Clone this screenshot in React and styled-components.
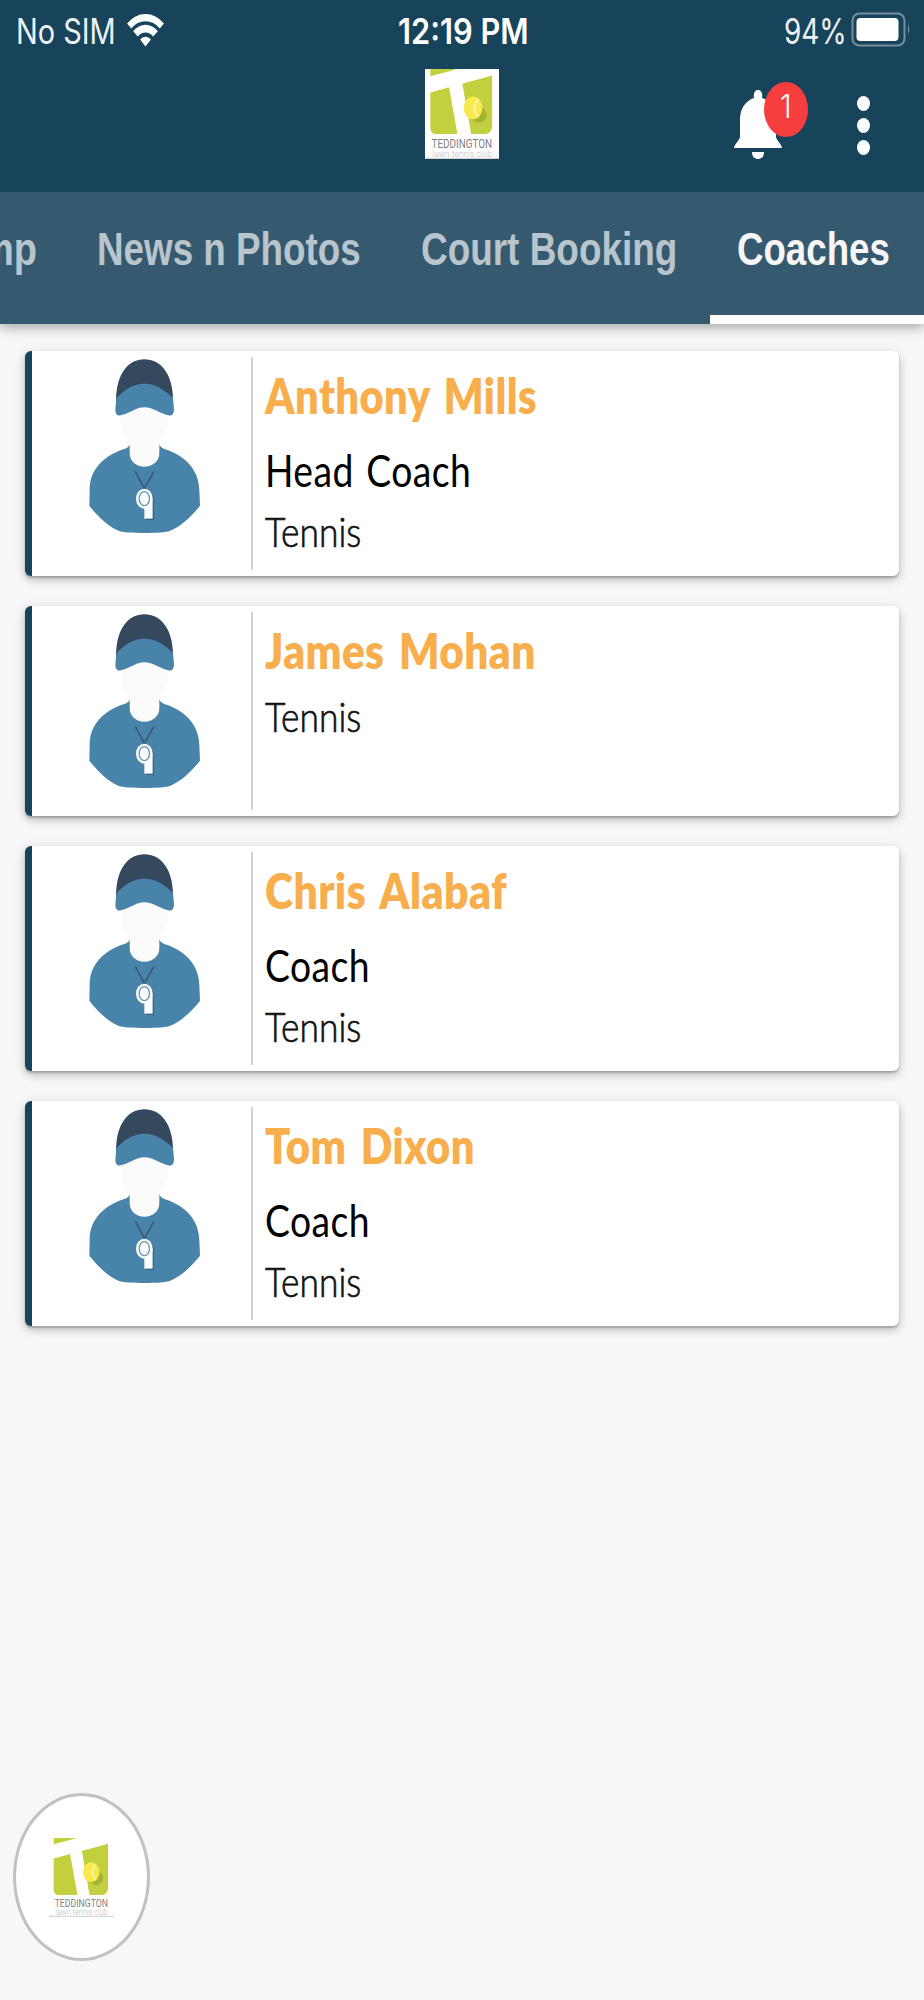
import { useLayoutEffect, useRef, useState } from "react";
import styled, { createGlobalStyle } from "styled-components";

const GlobalStyle = createGlobalStyle`
  * {
    box-sizing: border-box;
  }

  body {
    margin: 0;
    background-color: #f7f7f7;
  }
`;

const Page = styled.div`
  position: relative;
  width: 924px;
  height: 2000px;
  overflow: hidden;
  background-color: #f7f7f7;
  font-family: Lato, sans-serif;
`;

const FitBox = styled.span`
  display: block;
  flex: none;
  white-space: nowrap;
`;

const FitText = styled.span`
  display: inline-block;
  vertical-align: top;
  transform-origin: 0 0;
`;

const StatusBar = styled.div`
  display: grid;
  grid-template-columns: 1fr auto 1fr;
  height: 60px;
  padding: 13px 13px 0 16px;
  background-color: #18445b;
  color: #fff;
  font-family: Inter, sans-serif;
  font-size: 35px;
  line-height: 36px;
`;

const StatusGroup = styled.div`
  display: flex;
  justify-content: ${({ $end }) => ($end ? "flex-end" : "flex-start")};
  color: #eef2f4;
`;

const Time = styled.div`
  font-weight: 600;
`;

const WifiIcon = styled.svg`
  width: 37px;
  height: 33px;
  margin: 1px 0 0 11px;
`;

const BatteryIcon = styled.svg`
  width: 60px;
  height: 36px;
  margin: -2px 0 0 4px;
`;

const AppBar = styled.header`
  position: relative;
  z-index: 1;
  display: grid;
  grid-template-columns: 1fr auto 1fr;
  height: 132px;
  padding-top: 9px;
  background-color: #18445b;
`;

const LogoFrame = styled.div`
  grid-column: 2;
  width: 74px;
  height: 90px;
  background-color: #fff;
`;

const LogoSvg = styled.svg`
  display: block;
  width: 100%;
  height: 100%;
`;

const Actions = styled.div`
  display: flex;
  justify-content: flex-end;
  padding: 13px 54px 0 0;
`;

const BellButton = styled.div`
  position: relative;
  width: 74px;
  height: 78px;
`;

const BellIcon = styled.svg`
  display: block;
  width: 48px;
  height: 70px;
  margin-top: 8px;
`;

const Badge = styled.div`
  position: absolute;
  top: 0;
  left: 30px;
  display: flex;
  justify-content: center;
  width: 44px;
  height: 55px;
  padding-top: 9px;
  border-radius: 50%;
  background-color: #f73e3e;
  color: #fff;
  font-family: Inter, sans-serif;
  font-size: 32px;
  font-weight: 300;
  line-height: 32px;
`;

const MenuDots = styled.div`
  display: flex;
  flex-direction: column;
  gap: 7px;
  margin: 14px 0 0 49px;
`;

const Dot = styled.span`
  width: 13px;
  height: 15px;
  border-radius: 50%;
  background-color: #fff;
`;

const Tabs = styled.nav`
  position: relative;
  display: flex;
  justify-content: flex-end;
  gap: 60px;
  height: 132px;
  padding: 27px 34px 0 0;
  background-color: #355a6f;
  box-shadow: 0 3px 12px rgba(0, 0, 0, 0.35);
`;

const Tab = styled.div`
  position: relative;
  flex: none;
  color: ${({ $active }) => ($active ? "#f7f5f5" : "#b9c5cc")};
  font-family: "Liberation Sans", sans-serif;
  font-size: 46px;
  font-weight: 700;
  line-height: 60px;
`;

const TabLine = styled.span`
  position: absolute;
  right: -34px;
  bottom: 0;
  left: -27.5px;
  height: 9px;
  background-color: #fff;
`;

const CoachList = styled.main`
  display: flex;
  flex-direction: column;
  gap: 30px;
  padding: 27px 25px 0;
`;

const CoachCard = styled.article`
  display: flex;
  height: ${({ $short }) => ($short ? "209.5px" : "225px")};
  border-left: 7px solid #18445b;
  border-radius: 6px;
  background-color: #fff;
  box-shadow:
    0 2px 2px rgba(0, 0, 0, 0.2),
    0 4px 8px rgba(0, 0, 0, 0.2),
    0 2px 16px rgba(0, 0, 0, 0.06);
`;

const Portrait = styled.div`
  width: 221px;
  margin: 6px 0;
  padding: 1px 0 0 55px;
  border-right: 2px solid #d2d2d2;
`;

const PortraitSvg = styled.svg`
  display: block;
  width: 115px;
  height: 177px;
`;

const Details = styled.div`
  padding: 14px 0 0 12px;
`;

const Name = styled.div`
  color: #f8ae4c;
  font-size: 49px;
  font-weight: 800;
  letter-spacing: 0.5px;
  line-height: 60px;
  word-spacing: 5px;
`;

const Role = styled.div`
  margin: 15px 0 -5px;
  color: #000;
  font-size: 44px;
  font-weight: 400;
  letter-spacing: 0.5px;
  line-height: 60px;
  word-spacing: 3px;
`;

const Sport = styled.div`
  margin-top: 9px;
  color: #111;
  font-size: 42px;
  font-weight: 300;
  line-height: 54px;
  -webkit-text-stroke: 0.7px #111;
`;

const ClubButton = styled.div`
  position: absolute;
  top: 1793px;
  left: 13px;
  display: flex;
  justify-content: center;
  width: 137px;
  height: 168px;
  padding-top: 42px;
  border: 3px solid #c1c1c1;
  border-radius: 50%;
  background-color: #fff;
`;

const ClubLogo = styled.div`
  width: 65px;
  height: 79px;
`;

const coaches = [
  { name: "Anthony Mills", nameWidth: 272, role: "Head Coach", roleWidth: 206, sport: "Tennis" },
  { name: "James Mohan", nameWidth: 271, sport: "Tennis" },
  { name: "Chris Alabaf", nameWidth: 242, role: "Coach", roleWidth: 105, sport: "Tennis" },
  { name: "Tom Dixon", nameWidth: 210, role: "Coach", roleWidth: 105, sport: "Tennis" },
];

const tabs = [
  { label: "mp", width: 57 },
  { label: "News n Photos", width: 264 },
  { label: "Court Booking", width: 256 },
  { label: "Coaches", width: 153, active: true },
];

// Condenses a line of text horizontally until it fills the given width.
function Fit({ width, children }) {
  const ref = useRef(null);
  const [scale, setScale] = useState(1);

  useLayoutEffect(() => {
    setScale(width / ref.current.offsetWidth);
  }, [width, children]);

  return (
    <FitBox style={{ width }}>
      <FitText ref={ref} style={{ transform: `scaleX(${scale})` }}>{children}</FitText>
    </FitBox>
  );
}

function ClubArt() {
  return (
    <LogoSvg viewBox="148 172 194 238" preserveAspectRatio="none">
      <path fill="#c2d03f" d="M162 172H228L222 175L162 191Z" />
      <path fill="#c2d03f" d="M162 234L211 220L233 344H176Q162 342 162 328Z" />
      <path fill="#c2d03f" d="M246 211L324 189V325Q322 341 308 344H269Z" />
      <ellipse cx="290" cy="293" rx="20" ry="21" fill="#a3b332" />
      <ellipse cx="274" cy="275" rx="24.500" ry="30" fill="#fae94a" />
      <path fill="none" stroke="#fdf9c4" strokeWidth="4" d="M289 253C274 260 274 288 288 298" />
      <text x="165" y="381" textLength="159" lengthAdjust="spacingAndGlyphs" fill="#808080" fontFamily="Roboto, sans-serif" fontSize="33" fontWeight="400">TEDDINGTON</text>
      <text x="167" y="405" textLength="157" lengthAdjust="spacingAndGlyphs" fill="#bdbdbd" fontFamily="Roboto, sans-serif" fontSize="25" fontWeight="300">lawn tennis club</text>
      <path stroke="#b5b5b5" strokeWidth="2" d="M148 408H342" />
    </LogoSvg>
  );
}

function CoachArt() {
  return (
    <PortraitSvg viewBox="260 85 345 531" preserveAspectRatio="none">
      <path fill="#fbfbfb" d="M358 250C362 300 372 325 388 352V370C388 395 408 413 432 413C457 413 477 395 477 370V352C492 325 503 300 508 250L432 222Z" />
      <path fill="#34495e" d="M347 215C347 130 385 89 432 89C480 89 518 130 518 215Z" />
      <path fill="#4883aa" d="M348 205C375 178 400 162 432 162C465 162 493 180 518 205L521 238C521 254 514 260 503 257C475 250 460 233 432 233C405 233 392 250 362 257C351 259 345 252 345 240Z" />
      <path fill="#4883aa" d="M388 344C386 352 380 356 372 358C310 378 268 420 268 480L267 528C292 560 325 592 356 604C375 612 490 612 508 604C540 592 574 560 599 528L597 480C595 420 555 378 492 358C484 355 479 351 477 344V370C477 395 457 411 432 411C408 411 388 395 388 370Z" />
      <path fill="none" stroke="#3b5870" strokeWidth="5" d="M405 425L432 476L461 425" />
      <path fill="#35637f" d="M436 480C450 482 461 495 461 510V571H437L435 538Z" />
      <ellipse cx="432" cy="507" rx="25" ry="30" fill="#fbfbfb" />
      <path fill="#fbfbfb" d="M432 507H457V567H432Z" />
      <ellipse cx="432" cy="507" rx="15.500" ry="21" fill="#fbfbfb" stroke="#6699b9" strokeWidth="4" />
    </PortraitSvg>
  );
}

function App() {
  return (
    <>
      <GlobalStyle />
      <Page>
        <StatusBar>
          <StatusGroup>
            <Fit width={100}>No SIM</Fit>
            <WifiIcon viewBox="0 0 37 33" preserveAspectRatio="none">
              <path fill="#fff" d="M0.100 9.400A26 32 0 0 1 36.900 9.400L32.800 14.400A20.300 25 0 0 0 4.200 14.400Z" />
              <path fill="#fff" d="M6.200 17.200A17 21 0 0 1 30.800 17.200L26.200 22.500A10.900 13.400 0 0 0 10.800 22.500Z" />
              <path fill="#fff" d="M13.100 25.500A7.600 9.400 0 0 1 23.900 25.500L18.500 32.500Z" />
            </WifiIcon>
          </StatusGroup>
          <Time>
            <Fit width={131}>12:19 PM</Fit>
          </Time>
          <StatusGroup $end>
            <Fit width={63}>94%</Fit>
            <BatteryIcon viewBox="0 0 60 36">
              <rect x="1.500" y="2.500" width="52" height="32" rx="7" fill="none" stroke="#748f9c" strokeWidth="2" />
              <rect x="5.500" y="7" width="42" height="23" rx="4" fill="#fff" />
              <path d="M57 13Q59.500 18.500 57 24Z" fill="#748f9c" />
            </BatteryIcon>
          </StatusGroup>
        </StatusBar>

        <AppBar>
          <LogoFrame>
            <ClubArt />
          </LogoFrame>
          <Actions>
            <BellButton>
              <BellIcon viewBox="0 0 48 70" preserveAspectRatio="none">
                <path fill="#fff" d="M20 8C19 3 21 0 24 0S29 3 28 8C37 11 42 19 42 30V47C43 51 47 53 48 58H0C1 53 5 51 6 47V30C6 19 11 11 20 8Z" />
                <path fill="#fff" d="M18 62H30C30 67 27 69 24 69S18 67 18 62Z" />
              </BellIcon>
              <Badge>
                <Fit width={12}>1</Fit>
              </Badge>
            </BellButton>
            <MenuDots>
              <Dot />
              <Dot />
              <Dot />
            </MenuDots>
          </Actions>
        </AppBar>

        <Tabs>
          {tabs.map((tab) => (
            <Tab key={tab.label} $active={tab.active}>
              <Fit width={tab.width}>{tab.label}</Fit>
              {tab.active && <TabLine />}
            </Tab>
          ))}
        </Tabs>

        <CoachList>
          {coaches.map((coach) => (
            <CoachCard key={coach.name} $short={!coach.role}>
              <Portrait>
                <CoachArt />
              </Portrait>
              <Details>
                <Name>
                  <Fit width={coach.nameWidth}>{coach.name}</Fit>
                </Name>
                {coach.role && (
                  <Role>
                    <Fit width={coach.roleWidth}>{coach.role}</Fit>
                  </Role>
                )}
                <Sport>
                  <Fit width={96}>{coach.sport}</Fit>
                </Sport>
              </Details>
            </CoachCard>
          ))}
        </CoachList>

        <ClubButton>
          <ClubLogo>
            <ClubArt />
          </ClubLogo>
        </ClubButton>
      </Page>
    </>
  );
}

export default App;
